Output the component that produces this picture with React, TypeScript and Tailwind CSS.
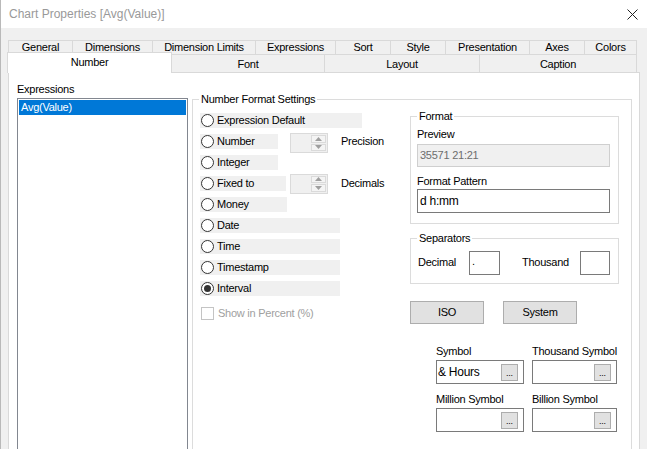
import * as React from "react";

const TOP_TABS: [string, number][] = [
  ["General", 64],
  ["Dimensions", 80],
  ["Dimension Limits", 103],
  ["Expressions", 80],
  ["Sort", 55],
  ["Style", 55],
  ["Presentation", 84],
  ["Axes", 55],
  ["Colors", 53],
];

const RADIOS: { label: string; w: string; extra?: "precision" | "decimals"; on?: boolean }[] = [
  { label: "Expression Default", w: "w-[162px]" },
  { label: "Number", w: "w-[78px]", extra: "precision" },
  { label: "Integer", w: "w-[78px]" },
  { label: "Fixed to", w: "w-[86px]", extra: "decimals" },
  { label: "Money", w: "w-[87px]" },
  { label: "Date", w: "w-[140px]" },
  { label: "Time", w: "w-[140px]" },
  { label: "Timestamp", w: "w-[140px]" },
  { label: "Interval", w: "w-[140px]", on: true },
];

function GroupBox({
  title,
  className,
  children,
}: {
  title: string;
  className: string;
  children?: React.ReactNode;
}) {
  return (
    <div className={"relative border border-[#dcdcdc] " + className}>
      <span className="absolute left-[6px] -top-[7px] bg-white px-[2px] leading-[13px]">
        {title}
      </span>
      {children}
    </div>
  );
}

function Radio({ on }: { on?: boolean }) {
  return (
    <span className="w-[13px] h-[13px] rounded-full border border-[#333] bg-white flex items-center justify-center shrink-0">
      {on && <span className="w-[7px] h-[7px] rounded-full bg-[#333]" />}
    </span>
  );
}

function Spinner() {
  return (
    <div className="w-[38px] h-[20px] border border-[#dadada] bg-[#f0f0f0] flex justify-end p-[1px]">
      <div className="w-[15px] h-full flex flex-col gap-[1px]">
        <div className="flex-1 border border-[#dadada] bg-[#f4f4f4] flex items-center justify-center">
          <svg width="7" height="4" viewBox="0 0 7 4">
            <path d="M0 4 L3.5 0 L7 4Z" fill="#9f9f9f" />
          </svg>
        </div>
        <div className="flex-1 border border-[#dadada] bg-[#f4f4f4] flex items-center justify-center">
          <svg width="7" height="4" viewBox="0 0 7 4">
            <path d="M0 0 L3.5 4 L7 0Z" fill="#9f9f9f" />
          </svg>
        </div>
      </div>
    </div>
  );
}

function SymbolField({ label, value, w }: { label: string; value?: string; w: string }) {
  return (
    <div className="flex flex-col">
      <div className="leading-[13px] -mt-[1px] mb-[1px]">{label}</div>
      <div
        className={
          "mt-[1px] h-[24px] border border-[#7a7a7a] bg-white flex items-center justify-between pl-[1px] pr-[5px] " +
          w
        }
      >
        <span className="text-[12px]">{value}</span>
        <span className="w-[17px] h-[17px] border border-[#adadad] bg-[#e1e1e1] flex items-end justify-center text-[9px] leading-[12px] pb-[1px]">
          ...
        </span>
      </div>
    </div>
  );
}

export default function App() {
  return (
    <div className="w-[647px] h-[449px] overflow-hidden bg-[#f0f0f0] border-l border-[#b9b9b9] flex flex-col font-['Liberation_Sans',Arial,sans-serif] text-[11px] tracking-[-0.25px] text-black">
      {/* title bar */}
      <div className="h-[28px] bg-white flex items-center justify-between pl-[8px] pr-[9px] shrink-0">
        <span className="text-[12px] tracking-normal text-[#999]">Chart Properties [Avg(Value)]</span>
        <svg width="11" height="11" viewBox="0 0 11 11">
          <path d="M0.5 0.5 L10.5 10.5 M10.5 0.5 L0.5 10.5" stroke="#222" strokeWidth="1" />
        </svg>
      </div>

      <div className="pl-[7px] pt-[12px] flex flex-col flex-1 min-h-0">
        {/* tabs */}
        <div className="flex h-[18px]">
          {TOP_TABS.map(([t, w], i) => (
            <div
              key={t}
              style={{ width: w }}
              className={
                "border-t border-l border-[#d9d9d9] flex items-center justify-center leading-[13px] " +
                (i === TOP_TABS.length - 1 ? "border-r" : "")
              }
            >
              {t}
            </div>
          ))}
        </div>
        <div className="flex h-[18px] relative">
          <div className="relative z-10 -mx-[1px] -mt-[2px] w-[165px] h-[21px] bg-white border-t border-l border-r border-[#d9d9d9] flex justify-center pt-[3px] leading-[13px]">
            Number
          </div>
          <div className="w-[153px] border-t border-l border-[#d9d9d9] flex items-center justify-center pt-[1px]">
            Font
          </div>
          <div className="w-[155px] border-t border-l border-[#d9d9d9] flex items-center justify-center pt-[1px]">
            Layout
          </div>
          <div className="w-[158px] border-t border-l border-r border-[#d9d9d9] flex items-center justify-center pt-[1px]">
            Caption
          </div>
        </div>

        {/* panel */}
        <div className="w-[632px] flex-1 bg-white border border-[#d9d9d9] flex items-start pl-[8px]">
          <div className="flex flex-col pt-[10px]">
            <div className="leading-[13px]">Expressions</div>
            <div className="mt-[2px] w-[171px] h-[360px] border border-[#828790] p-[1px]">
              <div className="h-[15px] bg-[#0078d7] text-white pl-[2px] leading-[15px]">Avg(Value)</div>
            </div>
          </div>

          <GroupBox title="Number Format Settings" className="ml-[4px] mt-[26px] w-[440px] h-[360px] flex pl-[7px] pt-[13px]">
            {/* radios */}
            <div className="w-[210px] flex flex-col">
              {RADIOS.map((r) => (
                <div key={r.label} className="h-[15px] mb-[6px] flex items-center">
                  <div className={"h-[15px] bg-[#f0f0f0] flex items-center pl-[1px] gap-[3px] " + r.w}>
                    <Radio on={r.on} />
                    <span className="leading-[13px]">{r.label}</span>
                  </div>
                  {r.extra === "precision" && (
                    <>
                      <div className="ml-[12px] mt-[3px]">
                        <Spinner />
                      </div>
                      <span className="ml-[13px] -mt-[1px]">Precision</span>
                    </>
                  )}
                  {r.extra === "decimals" && (
                    <>
                      <div className="ml-[4px]">
                        <Spinner />
                      </div>
                      <span className="ml-[13px]">Decimals</span>
                    </>
                  )}
                </div>
              ))}
              <div className="mt-[5px] flex items-center gap-[4px] pl-[1px] text-[#a0a0a0]">
                <span className="w-[13px] h-[13px] border border-[#c4c4c4] bg-white" />
                <span className="leading-[13px]">Show in Percent (%)</span>
              </div>
            </div>

            {/* right column */}
            <div className="flex flex-col mt-[3px]">
              <GroupBox title="Format" className="w-[209px] h-[108px] pl-[6px] pt-[11px]">
                <div className="leading-[13px]">Preview</div>
                <div className="mt-[3px] w-[193px] h-[23px] border border-[#cfcfcf] bg-[#f0f0f0] text-[#6d6d6d] flex items-center pl-[2px]">
                  35571 21:21
                </div>
                <div className="mt-[8px] leading-[13px]">Format Pattern</div>
                <div className="mt-[1px] w-[193px] h-[24px] border border-[#7a7a7a] bg-white flex items-center pl-[2px] text-[12px]">
                  d h:mm
                </div>
              </GroupBox>

              <GroupBox title="Separators" className="mt-[14px] w-[209px] h-[46px] flex items-start pl-[7px] pt-[12px]">
                <span className="w-[51px] mt-[5px] leading-[13px]">Decimal</span>
                <div className="w-[31px] h-[24px] border border-[#7a7a7a] bg-white pl-[2px] leading-[18px]">.</div>
                <span className="ml-[22px] w-[58px] mt-[5px] leading-[13px]">Thousand</span>
                <div className="w-[30px] h-[24px] border border-[#7a7a7a] bg-white" />
              </GroupBox>

              <div className="mt-[17px] flex">
                <button className="w-[74px] h-[23px] border border-[#adadad] bg-[#e1e1e1]">ISO</button>
                <button className="ml-[19px] w-[74px] h-[23px] border border-[#adadad] bg-[#e1e1e1]">System</button>
              </div>

              <div className="mt-[22px] ml-[26px] flex flex-col">
                <div className="flex gap-[8px]">
                  <SymbolField label="Symbol" value="& Hours" w="w-[88px]" />
                  <SymbolField label="Thousand Symbol" w="w-[85px]" />
                </div>
                <div className="mt-[10px] flex gap-[8px]">
                  <SymbolField label="Million Symbol" w="w-[88px]" />
                  <SymbolField label="Billion Symbol" w="w-[85px]" />
                </div>
              </div>
            </div>
          </GroupBox>
        </div>
      </div>
    </div>
  );
}
